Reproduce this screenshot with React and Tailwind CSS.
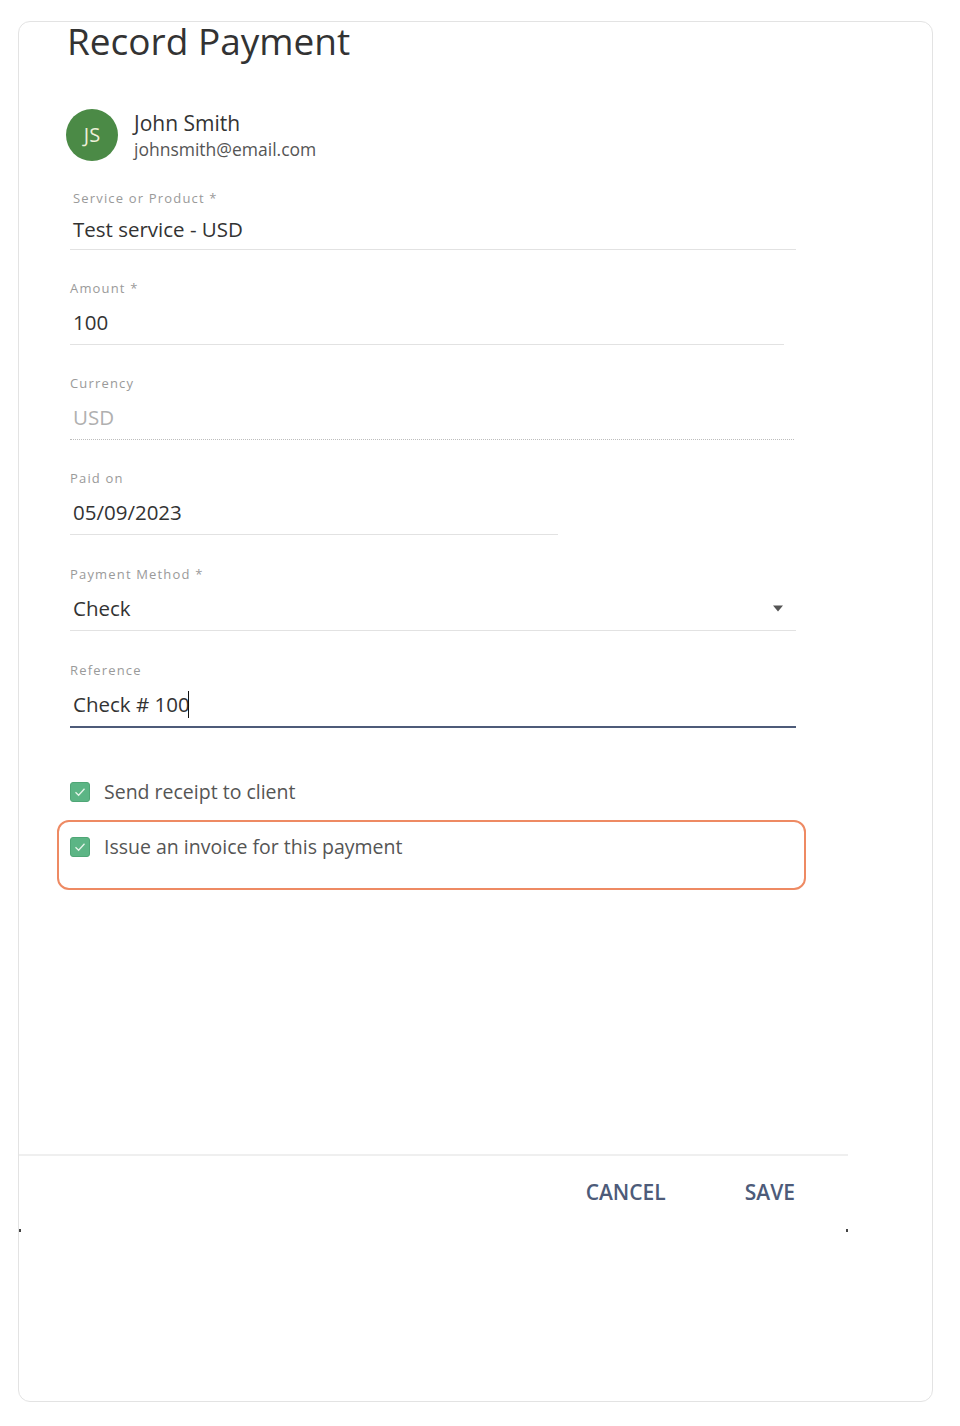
import React from 'react';

const font = { fontFamily: '"Open Sans", "Liberation Sans", sans-serif' };

function Field({ label, width, children, underline = 'solid', first = false, pt = 'pt-[30px]' }) {
  const line =
    underline === 'dotted'
      ? 'border-b border-dotted border-[#bdbdbd]'
      : underline === 'active'
      ? 'border-b-2 border-[#4d5b79]'
      : 'border-b border-[#e2e2e2]';
  const box = first ? 'h-[40px]' : underline === 'active' ? 'h-[46px]' : 'h-[45px]';
  return (
    <div className={first ? 'pt-[29px]' : pt} style={{ width }}>
      <div
        className={`text-[13px] leading-4 tracking-[0.09em] text-[#9a9a9a] ${first ? 'pl-[3px]' : ''}`}
      >
        {label}
      </div>
      <div className={`mt-1 ${box} flex items-center pl-[3px] ${line}`}>{children}</div>
    </div>
  );
}

function Checkbox() {
  return (
    <span className="w-5 h-5 rounded-[3px] bg-[#5cb585] border border-[#4fa676] flex items-center justify-center shrink-0">
      <svg width="12" height="10" viewBox="0 0 12 10" fill="none">
        <path d="M1.5 5.2 L4.6 8.2 L10.5 1.8" stroke="#e6f4ea" strokeWidth="1.3" />
      </svg>
    </span>
  );
}

export default function App() {
  return (
    <div className="bg-white min-h-[1426px] pt-[21px] pl-[18px]" style={font}>
      <div className="w-[915px] h-[1381px] border border-[#e3e3e3] rounded-[12px]">
        <div className="w-[829px]">
          {/* title */}
          <h1 className="ml-[48px] text-[37px] leading-[37px] text-[#333]">Record Payment</h1>

          {/* client */}
          <div className="mt-[50px] ml-[47px] h-[52px] flex items-center gap-4">
            <div className="w-[52px] h-[52px] rounded-full bg-[#4b8a46] flex items-center justify-center text-[20px] text-[#eef0d8]">
              JS
            </div>
            <div className="h-[52px] flex flex-col justify-center pt-[2px]">
              <span className="text-[21px] leading-[26px] text-[#333]">John Smith</span>
              <span className="text-[17.5px] leading-[26px] text-[#555]">johnsmith@email.com</span>
            </div>
          </div>

          {/* form */}
          <div className="ml-[51px]">
            <Field label="Service or Product *" width={726} first>
              <span className="text-[20.5px] text-[#333]">Test service - USD</span>
            </Field>
            <Field label="Amount *" width={714}>
              <span className="text-[20.5px] text-[#333]">100</span>
            </Field>
            <Field label="Currency" width={724} underline="dotted">
              <span className="text-[20.5px] text-[#b0b0b0]">USD</span>
            </Field>
            <Field label="Paid on" width={488}>
              <span className="text-[20.5px] text-[#333]">05/09/2023</span>
            </Field>
            <Field label="Payment Method *" width={726} pt="pt-[31px]">
              <span className="text-[20.5px] text-[#333] flex-1">Check</span>
              <svg width="12" height="7" viewBox="0 0 12 7" className="mr-[12px]">
                <path d="M1 0.5 H11 L6 6.5 Z" fill="#555" />
              </svg>
            </Field>
            <Field label="Reference" width={726} underline="active" pt="pt-[31px]">
              <span className="text-[20.5px] text-[#333]">Check # 100</span>
              <span className="w-px h-[27px] bg-[#111] ml-[-2px]" />
            </Field>

            <div className="mt-[54px] flex items-center gap-[14px]">
              <Checkbox />
              <span className="text-[19.5px] leading-5 text-[#555]">Send receipt to client</span>
            </div>

            <div className="mt-[18px] ml-[-13px] w-[749px] h-[70px] border-2 border-[#ee8a63] rounded-[12px] pt-[15px] pl-[11px]">
              <div className="flex items-center gap-[14px]">
                <Checkbox />
                <span className="text-[19.5px] leading-5 text-[#555]">Issue an invoice for this payment</span>
              </div>
            </div>
          </div>

          {/* footer */}
          <div className="mt-[264px] h-[2px] bg-[#efefef]" />
          <div className="mt-6 flex justify-end gap-[79px] pr-[53px]">
            <button className="text-[21px] leading-6 font-semibold text-[#4d5b79]">CANCEL</button>
            <button className="text-[21px] leading-6 font-semibold text-[#4d5b79]">SAVE</button>
          </div>
          <div className="mt-[25px] h-[3px] flex justify-between">
            <span className="w-[2px] h-[3px] bg-[#444]" />
            <span className="w-[2px] h-[3px] bg-[#444]" />
          </div>
        </div>
      </div>
    </div>
  );
}
